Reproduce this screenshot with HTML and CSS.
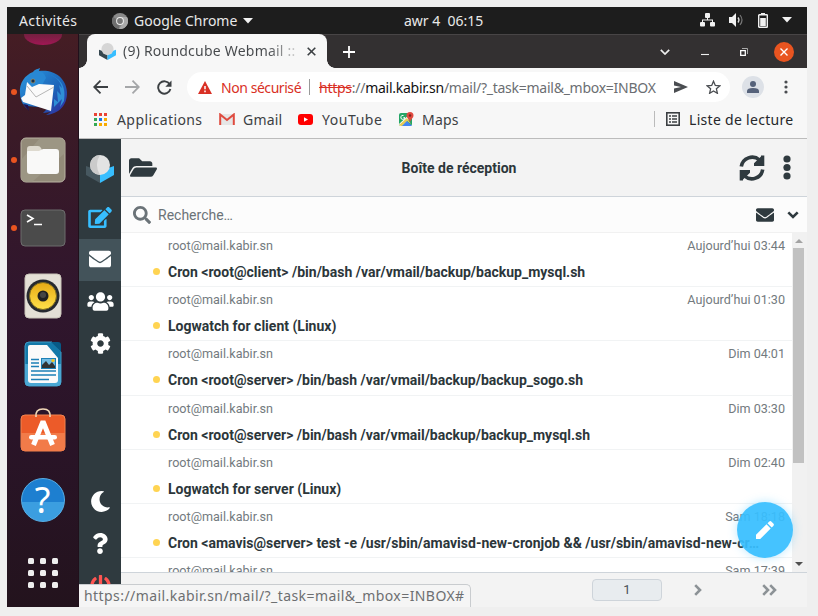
FILE: index.html
```
<!DOCTYPE html>
<html lang="fr">
<head>
<meta charset="utf-8">
<title>Roundcube Webmail</title>
<link rel="stylesheet" href="styles.css">
</head>
<body>
<div class="desktop">
  <header class="topbar">
    <span class="activities">Activités</span>
    <svg class="chrome-ic" width="16" height="16" viewBox="0 0 16 16"><circle cx="8" cy="8" r="8" fill="#8a8a8a"/><path d="M8 8 1.1 4A8 8 0 0 0 7 15.900z" fill="#6e6e6e"/><path d="M8 4h7a8 8 0 0 1-8 12l4-6z" fill="#a9a9a9"/><circle cx="8" cy="8" r="3.900" fill="#eee"/><circle cx="8" cy="8" r="2.900" fill="#777"/></svg>
    <span class="appname">Google Chrome</span>
    <svg class="caret" width="10" height="6" viewBox="0 0 10 6"><path d="M0 0h10L5 5.500z" fill="#f2f2f2"/></svg>
    <span class="clock">awr 4&nbsp; 06:15</span>
    <div class="tray">
      <svg width="15" height="14" viewBox="0 0 15 14" fill="#f2f2f2"><rect x="5" width="5" height="5" rx="1"/><rect y="9" width="5" height="4.500" rx="1"/><rect x="10" y="9" width="5" height="4.500" rx="1"/><path d="M7 4h1v2.500h5V10h-1V7.500H3V10H2V6.500h5z"/></svg>
      <svg width="15" height="14" viewBox="0 0 15 14" fill="none"><path d="M0 4h3l4-4v14l-4-4H0z" fill="#f2f2f2"/><path d="M9 4.500q2 2.500 0 5" stroke="#ddd" stroke-width="1.300"/><path d="M11 2q4 5 0 10" stroke="#777" stroke-width="1.200"/></svg>
      <svg width="10" height="15" viewBox="0 0 10 15"><path d="M3 0h4v1.500H3z" fill="#f2f2f2"/><rect x=".7" y="1.700" width="8.600" height="12.600" rx=".6" fill="none" stroke="#f2f2f2" stroke-width="1.400"/><path d="M2.200 5h5.600v8H2.200z" fill="#f2f2f2"/></svg>
      <svg width="10" height="6" viewBox="0 0 10 6"><path d="M0 0h10L5 5.500z" fill="#f2f2f2"/></svg>
    </div>
  </header>

  <div class="main">
    <nav class="dock">
      <div class="slot first"><span class="firefox"></span></div>
      <div class="slot on"><svg width="50" height="50" viewBox="0 0 50 50">
        <defs><linearGradient id="tb" x1="0" y1="0" x2="1" y2="1"><stop offset="0" stop-color="#2d9be0"/><stop offset=".6" stop-color="#1c63b8"/><stop offset="1" stop-color="#35269b"/></linearGradient></defs>
        <path d="M2 26C1 16 7 8 15 5c2-3 5-3 7-4l-1 3c14-2 27 6 28 21 .5 13-8 22-21 23l5-3-8 1 5-5-21-2 2 4C6 40 2 34 2 26z" fill="url(#tb)"/>
        <path d="M13 8c5-5 13-5 15 3l-4 7-9 2-5 6c-2-7-2-13 3-18z" fill="#2888d4"/>
        <path d="M29 7c8 2 13 6 15 14l-3-3 2 10-4-4 1 11-4-3v8l8-8-2 8 4-6c2-12-1-23-17-27z" fill="#2f8fd6"/>
        <path d="M5 37l6 7-1-6z" fill="#21104d"/>
        <path d="M9 15 7 28 3 31l2 4 28 9 3-26-15-1-7 3z" fill="#fafafa"/>
        <path d="M9 19l9 11 18-10" fill="none" stroke="#b6b6b6"/>
        <circle cx="15" cy="14" r="2" fill="#18314f" stroke="#c39b4f" stroke-width=".6"/>
      </svg></div>
      <div class="slot on"><svg width="46" height="46" viewBox="0 0 46 46"><rect x="1" y="1" width="44" height="44" rx="5" fill="#938b79" stroke="#b9b3a3"/><path d="M20 1h20q5 0 5 5v10L12 45H6q-5 0-5-5V23z" fill="#9f9887" opacity=".8"/><path d="M7 12q0-3 3-3h8q2 0 3 2l1 2h10v8H7z" fill="#dedacf"/><path d="M7 15q0-1 1-1h11l4-2h13q3 0 3 3v19q0 3-3 3H10q-3 0-3-3z" fill="#f9f9f8"/></svg></div>
      <div class="slot on"><svg width="46" height="38" viewBox="0 0 46 38"><rect x="1" y="1" width="44" height="36" rx="4" fill="#4b4b4b" stroke="#6d6d6d"/><path d="m7 6 6 3.500L7 13M14 15.500h8" fill="none" stroke="#fff" stroke-width="1.600"/></svg></div>
      <div class="slot"><svg width="38" height="46" viewBox="0 0 38 46"><defs><linearGradient id="rb" x1="0" y1="0" x2="0" y2="1"><stop offset="0" stop-color="#e5a915"/><stop offset="1" stop-color="#ffe14a"/></linearGradient></defs><rect x="1" y="1" width="36" height="44" rx="4" fill="#e4e0d6" stroke="#c9c4b8"/><circle cx="19" cy="23" r="16.500" fill="#26292f"/><circle cx="19" cy="23" r="13.500" fill="url(#rb)" stroke="#7a6a20"/><circle cx="19" cy="23" r="5.500" fill="#202020"/><circle cx="19" cy="22" r="3" fill="#444"/></svg></div>
      <div class="slot"><svg width="38" height="46" viewBox="0 0 38 46"><path d="M5 1h23l9 10v30q0 4-4 4H5q-4 0-4-4V5q0-4 4-4z" fill="#1379a9" stroke="#3f9cc5"/><path d="M1 23h36v18q0 4-4 4H5q-4 0-4-4z" fill="#4aa8d4"/><path d="M27 1h7q3 0 3 3v7z" fill="#075a86"/><path d="M6 4h17l11 13v22q0 3-3 3H7q-3 0-3-3V6q0-2 2-2z" fill="#fafafa"/><path d="M7 18.500h8M7 22h8M7 25.500h8M7 30h25M7 34h25M7 38.500h18" stroke="#1d80b6" stroke-width="1.700"/><path d="M17 17h15v11H17z" fill="#1d80b6"/><path d="M18 18h13v9H18z" fill="#73bce3"/><path d="m18 27v-3l4-4 3 4 3-3 3 4v2z" fill="#333"/><circle cx="29" cy="19.500" r="1.600" fill="#f5c518"/></svg></div>
      <div class="slot bag"><svg width="46" height="46" viewBox="0 0 46 46"><rect x="1" y="9" width="44" height="36" rx="4" fill="#ec5b29" stroke="#f3834f"/><path d="M1 27h44v14q0 4-4 4H5q-4 0-4-4z" fill="#f27b49"/><path d="M16 12q-1-8 7-8t7 8" fill="none" stroke="#f2d9b8" stroke-width="1.700" transform="translate(0 -1)"/><path d="M13.500 39 23 15.500 32.500 39" fill="none" stroke="#fff" stroke-width="5" stroke-linejoin="bevel"/><rect x="9" y="29" width="28" height="4.600" rx="2.300" fill="#fff"/></svg></div>
      <div class="slot"><span class="help">?</span></div>
      <div class="apps"><i></i><i></i><i></i><i></i><i></i><i></i><i></i><i></i><i></i></div>
    </nav>

    <section class="window">
      <div class="tabstrip">
        <div class="tab">
          <svg width="17" height="17" viewBox="0 0 28 28"><path d="M0 11v9l14 8V16z" fill="#35474f"/><path d="M28 11v9l-14 8V16z" fill="#37beff"/><circle cx="14" cy="10" r="10" fill="#d6d6d6"/></svg>
          <span class="tabtitle">(9) Roundcube Webmail ::</span>
          <svg class="close" width="9" height="9" viewBox="0 0 9 9"><path d="m.7.7 7.600 7.600m0-7.600L.7 8.300" stroke="#3c4043" stroke-width="1.600"/></svg>
        </div>
        <svg class="plus" width="12" height="12" viewBox="0 0 12 12"><path d="M0 6h12M6 0v12" stroke="#fff" stroke-width="1.800"/></svg>
        <div class="winctl">
          <svg width="10" height="6" viewBox="0 0 10 6"><path d="m.8.800 4.200 4.200L9.200.800" fill="none" stroke="#eee" stroke-width="1.700"/></svg>
          <svg width="8" height="8" viewBox="0 0 8 8"><path d="M0 6.500h8" stroke="#eee" stroke-width="1.100"/></svg>
          <svg width="8" height="8" viewBox="0 0 8 8"><path d="M.7 2.700h4.600v4.600H.700z" fill="none" stroke="#fff" stroke-width="1.300"/><path d="M2 .500h5.500V6" fill="none" stroke="#aaa"/></svg>
          <span class="winclose"><svg width="8" height="8" viewBox="0 0 8 8"><path d="m.5.500 7 7m0-7-7 7" stroke="#fff" stroke-width="1.400"/></svg></span>
        </div>
      </div>

      <div class="toolbar">
        <svg width="15" height="14" viewBox="0 0 15 14" fill="none" stroke="#3c4043" stroke-width="1.800"><path d="M15 7H1.500M7.500.700 1.200 7l6.300 6.300"/></svg>
        <svg width="15" height="14" viewBox="0 0 15 14" fill="none" stroke="#a5a7a9" stroke-width="1.800"><path d="M0 7h13.500M7.500.700 13.800 7l-6.300 6.300"/></svg>
        <svg width="15" height="15" viewBox="0 0 15 15"><path d="M12.700 4.300A6.200 6.200 0 1 0 13.400 9" fill="none" stroke="#3c4043" stroke-width="1.900"/><path d="M14.500.500v6.200H8.300z" fill="#3c4043"/></svg>
        <div class="omnibox">
          <svg class="warn" width="14" height="13" viewBox="0 0 14 13"><path d="M7 0l7 13H0z" fill="#d93025"/><path d="M7 5v3.200M7 9.500v1.700" stroke="#fff" stroke-width="1.500"/></svg>
          <span class="insecure">Non sécurisé</span>
          <span class="sep"></span>
          <span class="url"><s>https</s>://<b>mail.kabir.sn</b>/mail/?_task=mail&amp;_mbox=INBOX</span>
          <svg class="send" width="14" height="12" viewBox="0 0 14 12"><path d="M0 0l14 6L0 12V7.500L7 6 0 4.500z" fill="#4a4d51"/></svg>
          <svg class="star" width="15" height="14" viewBox="0 0 15 14"><path d="M7.500 1.200l1.800 4.200 4.600.400-3.500 3 1 4.500-3.900-2.400-3.900 2.400 1-4.500-3.500-3 4.600-.4z" fill="none" stroke="#4a4d51" stroke-width="1.300"/></svg>
        </div>
        <span class="avatar"><svg width="12" height="12" viewBox="0 0 12 12" fill="#56627a"><circle cx="6" cy="3" r="3"/><path d="M0 12v-2q0-3 6-3t6 3v2z"/></svg></span>
        <svg class="kebab" width="4" height="14" viewBox="0 0 4 14" fill="#4a4d51"><circle cx="2" cy="2" r="1.600"/><circle cx="2" cy="7" r="1.600"/><circle cx="2" cy="12" r="1.600"/></svg>
      </div>

      <div class="bookmarks">
        <svg class="grid" width="13" height="13" viewBox="0 0 13 13"><path d="M0 0h3v3H0zm5 0h3v3H5zm5 0h3v3h-3z" fill="#ea4335"/><path d="M0 5h3v3H0zm0 5h3v3H0z" fill="#34a853"/><path d="M5 5h3v3H5z" fill="#1a73e8"/><path d="M10 5h3v3h-3zM5 10h3v3H5zm5 0h3v3h-3z" fill="#f9ab00"/></svg>
        <span class="bm-apps">Applications</span>
        <svg class="gm" width="16" height="12" viewBox="0 0 16 12"><path d="M1 1h14v11H1z" fill="#e6e6e6"/><path d="M1.200 12V1.500L8 7l6.800-5.500V12" fill="none" stroke="#df4b3f" stroke-width="2"/></svg>
        <span class="bm-gmail">Gmail</span>
        <svg class="yt" width="15" height="11" viewBox="0 0 15 11"><rect width="15" height="11" rx="3" fill="red"/><path d="M6 3.200v4.600l4-2.300z" fill="#fff"/></svg>
        <span class="bm-yt">YouTube</span>
        <svg class="mp" width="15" height="15" viewBox="0 0 15 15"><rect y="1" width="13" height="13" rx="2" fill="#24a566"/><path d="M0 12 11 2l2 2-10 10H1z" fill="#fff"/><path d="M0 13 8 6l4 6-4-3-5 5H2z" fill="#e8ca53"/><path d="M3 14l5-5 5 5z" fill="#4285f4"/><path d="M4.500 3.500a2 2 0 1 0 1.300 2H4.500" stroke="#fff" fill="none"/><path d="M11 10C10 7 7.500 6 7.500 3.500a3.500 3.500 0 0 1 7 0C14.500 6 12 7 11 10z" fill="#e04a3f"/><circle cx="11" cy="3.500" r="1.200" fill="#7b231e"/></svg>
        <span class="bm-maps">Maps</span>
        <span class="bm-sep"></span>
        <svg class="rl" width="14" height="14" viewBox="0 0 14 14"><rect x=".8" y=".8" width="12.400" height="12.400" fill="none" stroke="#3c4043" stroke-width="1.600"/><path d="M3 4h2m1 0h5M3 7h2m1 0h5M3 10h2m1 0h5" stroke="#3c4043" stroke-width="1.500"/></svg>
        <span class="bm-list">Liste de lecture</span>
      </div>

      <div class="page">
        <aside class="taskmenu">
          <div class="logo"><svg width="28" height="28" viewBox="0 0 28 28"><path d="M0 11v9l14 8V16z" fill="#475860"/><path d="M28 11v9l-14 8V16z" fill="#37beff"/><circle cx="14" cy="10" r="10" fill="#e3e3e3"/><path d="M14 0a10 10 0 0 0 0 20A18 18 0 0 1 14 0z" fill="#cbcbcb"/></svg></div>
          <div class="task"><svg width="24" height="21" viewBox="0 0 576 512" fill="#37beff"><path d="M402.600 83.200l90.200 90.200c3.800 3.800 3.800 10 0 13.800L274.400 405.600l-92.800 10.300c-12.400 1.400-22.900-9.100-21.500-21.500l10.300-92.800L388.800 83.200c3.800-3.800 10-3.800 13.800 0zm162-22.900l-48.800-48.800c-15.200-15.200-39.900-15.200-55.200 0l-35.400 35.400c-3.800 3.800-3.800 10 0 13.800l90.200 90.200c3.800 3.800 10 3.800 13.800 0l35.400-35.400c15.200-15.300 15.200-40 0-55.200zM384 346.200V448H64V128h229.800c3.200 0 6.200-1.300 8.500-3.500l40-40c7.600-7.600 2.200-20.500-8.500-20.500H48C21.500 64 0 85.500 0 112v352c0 26.500 21.500 48 48 48h352c26.500 0 48-21.500 48-48V306.200c0-10.700-12.900-16-20.500-8.500l-40 40c-2.200 2.300-3.500 5.300-3.500 8.500z"/></svg></div>
          <div class="task sel"><svg width="22" height="22" viewBox="0 0 512 512" fill="#fff"><path d="M502.300 190.800c3.900-3.100 9.700-.2 9.700 4.700V400c0 26.500-21.500 48-48 48H48c-26.500 0-48-21.500-48-48V195.600c0-5 5.700-7.800 9.700-4.700 22.400 17.400 52.100 39.500 154.100 113.600 21.100 15.400 56.700 47.800 92.200 47.600 35.700.3 72-32.800 92.300-47.600 102-74.100 131.600-96.300 154-113.700zM256 320c23.200.4 56.600-29.200 73.400-41.400 132.700-96.300 142.800-104.700 173.400-128.700 5.800-4.500 9.200-11.500 9.200-18.900v-19c0-26.500-21.500-48-48-48H48c-26.500 0-48 21.500-48 48v19c0 7.400 3.400 14.300 9.200 18.900 30.600 23.900 40.700 32.400 173.400 128.700 16.800 12.200 50.200 41.800 73.400 41.400z"/></svg></div>
          <div class="task"><svg width="27" height="21" viewBox="0 0 640 512" fill="#fff"><path d="M96 224c35.300 0 64-28.700 64-64s-28.700-64-64-64-64 28.700-64 64 28.700 64 64 64zm448 0c35.300 0 64-28.700 64-64s-28.700-64-64-64-64 28.700-64 64 28.700 64 64 64zm32 32h-64c-17.600 0-33.500 7.100-45.100 18.600 40.300 22.100 68.900 62 75.100 109.400h66c17.700 0 32-14.300 32-32v-32c0-35.300-28.700-64-64-64zm-256 0c61.900 0 112-50.100 112-112S381.900 32 320 32 208 82.100 208 144s50.100 112 112 112zm76.800 32h-8.300c-20.800 10-43.900 16-68.500 16s-47.600-6-68.500-16h-8.300C179.600 288 128 339.600 128 403.200V432c0 26.500 21.500 48 48 48h288c26.500 0 48-21.500 48-48v-28.800c0-63.600-51.600-115.200-115.200-115.200zm-223.700-13.400C161.500 263.100 145.600 256 128 256H64c-35.300 0-64 28.700-64 64v32c0 17.700 14.300 32 32 32h65.900c6.300-47.400 34.900-87.300 75.200-109.400z"/></svg></div>
          <div class="task"><svg width="21" height="21" viewBox="0 0 512 512" fill="#fff"><path d="M487.400 315.700l-42.600-24.600c4.300-23.200 4.300-47 0-70.200l42.600-24.600c4.900-2.800 7.100-8.600 5.500-14-11.100-35.600-30-67.800-54.700-94.600-3.800-4.100-10-5.100-14.800-2.300L380.800 110c-17.900-15.400-38.500-27.300-60.800-35.100V25.800c0-5.600-3.900-10.500-9.400-11.700-36.700-8.200-74.300-7.800-109.200 0-5.500 1.200-9.400 6.100-9.400 11.700V75c-22.200 7.900-42.800 19.800-60.800 35.100L88.700 85.500c-4.900-2.800-11-1.900-14.800 2.300-24.700 26.700-43.600 58.900-54.700 94.600-1.700 5.400.6 11.200 5.500 14L67.300 221c-4.300 23.200-4.300 47 0 70.200l-42.600 24.600c-4.900 2.800-7.100 8.600-5.500 14 11.100 35.600 30 67.800 54.700 94.600 3.800 4.100 10 5.100 14.800 2.300l42.600-24.600c17.900 15.400 38.500 27.300 60.800 35.100v49.200c0 5.600 3.900 10.500 9.400 11.700 36.700 8.200 74.300 7.800 109.200 0 5.500-1.200 9.400-6.100 9.400-11.700v-49.200c22.200-7.900 42.800-19.800 60.800-35.100l42.600 24.600c4.900 2.800 11 1.900 14.800-2.300 24.700-26.700 43.600-58.900 54.700-94.600 1.500-5.500-.7-11.300-5.600-14.100zM256 336c-44.100 0-80-35.900-80-80s35.900-80 80-80 80 35.900 80 80-35.900 80-80 80z"/></svg></div>
          <div class="task low"><svg width="21" height="21" viewBox="0 0 512 512" fill="#fff"><path d="M283.211 512c78.962 0 151.079-35.925 198.857-94.792 7.068-8.708-.639-21.430-11.562-19.350-124.203 23.654-238.262-71.576-238.262-196.954 0-72.222 38.662-138.635 101.498-174.394 9.686-5.512 7.250-20.197-3.756-22.230A258.156 258.156 0 0 0 283.211 0c-141.309 0-256 114.511-256 256 0 141.309 114.511 256 256 256z"/></svg></div>
          <div class="task"><svg width="16" height="21" viewBox="0 0 384 512" fill="#fff"><path d="M202.021 0C122.202 0 70.503 32.703 29.914 91.026c-7.363 10.580-5.093 25.086 5.178 32.874l43.138 32.709c10.373 7.865 25.132 6.026 33.253-4.148 25.049-31.381 43.630-49.449 82.757-49.449 30.764 0 68.816 19.799 68.816 49.631 0 22.552-18.617 34.134-48.993 51.164-35.423 19.860-82.299 44.576-82.299 106.405V320c0 13.255 10.745 24 24 24h72.471c13.255 0 24-10.745 24-24v-5.773c0-42.860 125.268-44.645 125.268-160.627C377.504 66.256 286.902 0 202.021 0zM192 373.459c-38.196 0-69.271 31.075-69.271 69.271 0 38.195 31.075 69.270 69.271 69.270s69.271-31.075 69.271-69.271-31.075-69.270-69.271-69.270z"/></svg></div>
          <div class="task"><svg width="21" height="21" viewBox="0 0 512 512" fill="#ff5552"><path d="M400 54.100c63 45 104 118.600 104 201.900 0 136.800-110.800 247.700-247.500 248C120 504.300 8.200 393 8 256.400 7.900 173.100 48.900 99.300 111.800 54.200c11.700-8.300 28-4.800 35 7.700L162.600 90c5.900 10.500 3.100 23.800-6.600 31-41.500 30.800-68 79.600-68 134.900-.1 92.300 74.500 168.100 168 168.100 91.600 0 168.600-74.200 168-169.100-.3-51.800-24.700-101.800-68.100-134-9.700-7.200-12.400-20.500-6.500-30.900l15.800-28.100c7-12.400 23.200-16.100 34.800-7.800zM296 264V24c0-13.300-10.700-24-24-24h-32c-13.300 0-24 10.700-24 24v240c0 13.300 10.700 24 24 24h32c13.300 0 24-10.700 24-24z"/></svg></div>
        </aside>

        <div class="content">
          <div class="head">
            <svg class="folder" width="28" height="25" viewBox="0 0 576 512" fill="#2f3a3f"><path d="M572.694 292.093L500.270 416.248A63.997 63.997 0 0 1 444.989 448H45.025c-18.523 0-30.064-20.093-20.731-36.093l72.424-124.155A64 64 0 0 1 152 256h399.964c18.523 0 30.064 20.093 20.730 36.093zM152 224h328v-48c0-26.510-21.490-48-48-48H272l-64-64H48C21.490 64 0 85.490 0 112v278.046l69.077-118.418C86.214 242.250 117.989 224 152 224z"/></svg>
            <h1>Boîte de réception</h1>
            <svg class="sync" width="26" height="26" viewBox="0 0 26 26"><g id="half"><path d="M2.300 11.500A11 11 0 0 1 20.500 5" fill="none" stroke="#2f3a3f" stroke-width="3.600"/><path d="M25.300.600V11H15V8.200l7-6.600V.600z" fill="#2f3a3f"/></g><use href="#half" transform="rotate(180 13 13)"/></svg>
            <svg class="dots" width="8" height="25" viewBox="0 0 8 25" fill="#2f3a3f"><circle cx="4" cy="4" r="3.600"/><circle cx="4" cy="12.500" r="3.600"/><circle cx="4" cy="21" r="3.600"/></svg>
          </div>
          <div class="search">
            <svg width="18" height="18" viewBox="0 0 512 512" fill="#6b7378"><path d="M505 442.700L405.300 343c-4.500-4.500-10.600-7-17-7H372c27.600-35.300 44-79.700 44-128C416 93.100 322.900 0 208 0S0 93.100 0 208s93.100 208 208 208c48.300 0 92.700-16.400 128-44v16.300c0 6.400 2.500 12.500 7 17l99.700 99.700c9.400 9.400 24.600 9.400 33.900 0l28.300-28.300c9.400-9.400 9.400-24.600.1-34zM208 336c-70.700 0-128-57.200-128-128 0-70.700 57.200-128 128-128 70.700 0 128 57.200 128 128 0 70.700-57.200 128-128 128z"/></svg>
            <span class="ph">Recherche…</span>
            <svg class="env" width="18" height="18" viewBox="0 0 512 512" fill="#2f3a3f"><path d="M502.300 190.800c3.900-3.100 9.700-.2 9.700 4.700V400c0 26.500-21.500 48-48 48H48c-26.500 0-48-21.500-48-48V195.600c0-5 5.700-7.800 9.700-4.700 22.400 17.400 52.100 39.500 154.100 113.600 21.100 15.400 56.700 47.800 92.200 47.600 35.700.3 72-32.800 92.300-47.600 102-74.100 131.600-96.300 154-113.700zM256 320c23.200.4 56.600-29.200 73.400-41.400 132.700-96.300 142.800-104.700 173.400-128.700 5.800-4.500 9.200-11.500 9.200-18.900v-19c0-26.500-21.500-48-48-48H48c-26.500 0-48 21.500-48 48v19c0 7.400 3.400 14.300 9.200 18.900 30.600 23.900 40.700 32.400 173.400 128.700 16.800 12.200 50.200 41.800 73.400 41.400z"/></svg>
            <svg class="chev" width="12" height="8" viewBox="0 0 12 8"><path d="m1.300 1.300L6 6l4.700-4.700" fill="none" stroke="#2f3a3f" stroke-width="2.600"/></svg>
          </div>
          <div class="listwrap">
            <ul class="list">
              <li><div class="meta"><span>root@mail.kabir.sn</span><span>Aujourd’hui 03:44</span></div><p>Cron &lt;root@client&gt; /bin/bash /var/vmail/backup/backup_mysql.sh</p></li>
              <li><div class="meta"><span>root@mail.kabir.sn</span><span>Aujourd’hui 01:30</span></div><p>Logwatch for client (Linux)</p></li>
              <li><div class="meta"><span>root@mail.kabir.sn</span><span>Dim 04:01</span></div><p>Cron &lt;root@server&gt; /bin/bash /var/vmail/backup/backup_sogo.sh</p></li>
              <li><div class="meta"><span>root@mail.kabir.sn</span><span>Dim 03:30</span></div><p>Cron &lt;root@server&gt; /bin/bash /var/vmail/backup/backup_mysql.sh</p></li>
              <li><div class="meta"><span>root@mail.kabir.sn</span><span>Dim 02:40</span></div><p>Logwatch for server (Linux)</p></li>
              <li><div class="meta"><span>root@mail.kabir.sn</span><span>Sam 18:18</span></div><p>Cron &lt;amavis@server&gt; test -e /usr/sbin/amavisd-new-cronjob &amp;&amp; /usr/sbin/amavisd-new-cr…</p></li>
              <li><div class="meta"><span>root@mail.kabir.sn</span><span>Sam 17:39</span></div></li>
            </ul>
            <div class="scroll"><i class="up"></i><i class="thumb"></i><i class="down"></i></div>
          </div>
          <div class="pager">
            <span class="pg">1</span>
            <svg class="next" width="8" height="12" viewBox="0 0 8 12"><path d="m1.200 1.200 4.800 4.800-4.800 4.800" fill="none" stroke="#8c9296" stroke-width="2.600"/></svg>
            <svg class="last" width="15" height="12" viewBox="0 0 15 12"><path d="m1.200 1.200 4.800 4.800-4.800 4.800m7-9.600L13 6l-4.800 4.800" fill="none" stroke="#8c9296" stroke-width="2.600"/></svg>
          </div>
          <div class="fab"><svg width="18" height="18" viewBox="0 0 18 18" fill="#fff"><path d="M0 18v-4.200L10.500 3.300l4.200 4.200L4.200 18zM11.500 2.300l1.600-1.600q1.200-1.200 2.400 0l1.800 1.800q1.200 1.200 0 2.400l-1.600 1.600z"/></svg></div>
        </div>
        <div class="status">https://mail.kabir.sn/mail/?_task=mail&amp;_mbox=INBOX#</div>
      </div>
    </section>
  </div>
</div>
</body>
</html>
```
FILE: styles.css
```
* { box-sizing: border-box; }
body { margin: 0; padding: 7px; width: 818px; height: 616px; overflow: hidden; background: #efefef; font-family: "Noto Sans", "Open Sans", sans-serif; font-size: 14px; }
svg { display: block; flex: none; }
span { white-space: nowrap; }
.desktop { width: 800px; height: 600px; overflow: hidden; display: flex; flex-direction: column; background: #2c1426; }

.topbar { height: 27px; flex: none; background: #1d1d1d; color: #e9e9e9; display: flex; align-items: center; padding-left: 12px; }
.activities { width: 93px; letter-spacing: .4px; }
.appname { margin-left: 6px; width: 105px; }
.caret { margin-left: 4px; }
.clock { margin-left: 151px; width: 79px; margin-top: -1px; }
.tray { margin-left: auto; margin-right: 15px; margin-top: -1px; display: flex; align-items: center; gap: 14px; }

.main { flex: 1; display: flex; min-height: 0; }
.dock { width: 72px; flex: none; display: flex; flex-direction: column; align-items: center; background: linear-gradient(#451d24 0, #3a1a27 18%, #30162d 45%, #2a1428 70%, #23131d 100%); border-right: 1px solid #20101b; overflow: hidden; }
.slot { position: relative; width: 72px; height: 68px; flex: none; display: flex; align-items: center; justify-content: center; }
.slot.first { height: 24px; align-items: flex-start; }
.slot.bag { padding-bottom: 6px; }
.firefox { width: 38px; height: 11px; border-radius: 0 0 20px 20px / 0 0 11px 11px; background: linear-gradient(#73203f, #a01754); }
.slot.on::before { content: ""; position: absolute; left: 4px; top: 31px; width: 6px; height: 6px; border-radius: 50%; background: #e95420; }
.help { width: 44px; height: 44px; border-radius: 50%; border: 1px solid #57afe7; background: linear-gradient(#1d7fd0 0 54%, #3b9ee0 55%); color: #fff; font: 36px/42px "Noto Sans", sans-serif; text-align: center; }
.apps { margin-top: 24px; display: grid; grid-template-columns: repeat(3, 6px); gap: 6px; }
.apps i { width: 6px; height: 6px; border-radius: 1.500px; background: #eee; }

.window { width: 728px; display: flex; flex-direction: column; background: #f7f7f7; min-height: 0; }
.tabstrip { height: 34px; flex: none; background: #333031; border-top: 1px solid #484546; display: flex; align-items: center; padding-left: 8px; }
.tab { position: relative; width: 240px; height: 34px; margin-top: -1px; background: #f7f7f7; border-radius: 8px 8px 0 0; display: flex; align-items: center; padding-left: 12px; color: #45484b; }
.tab::before, .tab::after { content: ""; position: absolute; bottom: 0; width: 8px; height: 8px; }
.tab::before { left: -8px; background: radial-gradient(circle at 0 0, transparent 7.500px, #f7f7f7 8px); }
.tab::after { right: -8px; background: radial-gradient(circle at 100% 0, transparent 7.500px, #f7f7f7 8px); }
.tabtitle { margin-left: 7px; margin-top: -1px; width: 176px; overflow: hidden; letter-spacing: .22px; background: linear-gradient(90deg, #45484b 82%, #ccc 98%); -webkit-background-clip: text; background-clip: text; color: transparent; }
.close { margin-left: 8px; }
.plus { margin-left: 16px; }
.winctl { margin-left: auto; margin-right: 13px; display: flex; align-items: center; gap: 31px; }
.winclose { width: 20px; height: 20px; margin-left: -5px; border-radius: 50%; background: #e95420; display: flex; align-items: center; justify-content: center; }

.toolbar { height: 38px; flex: none; display: flex; align-items: center; padding-left: 14px; gap: 17px; }
.omnibox { width: 543px; height: 30px; margin-left: -2px; border-radius: 15px; background: #fff; display: flex; align-items: center; padding-left: 11px; }
.insecure { margin-left: 9px; width: 81px; color: #d93025; letter-spacing: -.44px; }
.sep { width: 1px; height: 16px; background: #999; margin: 0 9px 0 7px; }
.url { width: 339px; color: #6b6e72; letter-spacing: -.26px; }
.url b { font-weight: 400; color: #111; }
.url s { color: #d93025; }
.send { margin-left: 16px; }
.star { margin-left: 18px; }
.avatar { width: 22px; height: 22px; margin-left: -5px; border-radius: 50%; background: #dde1e7; display: flex; align-items: center; justify-content: center; }
.kebab { margin-left: 3px; }

.bookmarks { height: 33px; flex: none; border-bottom: 1px solid #bcbcbc; display: flex; align-items: center; padding: 0 0 6px 15px; color: #3c4043; }
.bm-apps { margin-left: 10px; width: 86px; letter-spacing: .42px; }
.gm { margin-left: 16px; }
.bm-gmail { margin-left: 8px; width: 39px; letter-spacing: .2px; }
.yt { margin-left: 16px; }
.bm-yt { margin-left: 9px; width: 60px; letter-spacing: .55px; }
.mp { margin-left: 17px; }
.bm-maps { margin-left: 8px; width: 37px; letter-spacing: .2px; }
.bm-sep { margin-left: 195px; width: 1px; height: 16px; background: #bbb; }
.rl { margin-left: 11px; }
.bm-list { margin-left: 9px; color: #26282b; letter-spacing: .3px; }

.page { position: relative; flex: 1; display: flex; min-height: 0; font-family: Roboto, sans-serif; color: #2c363a; }
.taskmenu { width: 42px; flex: none; background: #2f3a3f; display: flex; flex-direction: column; overflow: hidden; }
.logo { height: 58px; flex: none; display: flex; align-items: center; justify-content: center; padding-top: 2px; }
.task { height: 42px; flex: none; display: flex; align-items: center; justify-content: center; padding-bottom: 2px; }
.sel { background: #43535a; }
.low { margin-top: 116px; }
.content { position: relative; flex: 1; min-width: 0; display: flex; flex-direction: column; background: #fff; }
.head { height: 58px; flex: none; background: #f3f3f3; border-bottom: 1px solid #ced4da; display: flex; align-items: center; padding: 0 16px 0 8px; }
.head h1 { flex: 1; margin: 0; padding-left: 22px; text-align: center; font-size: 14px; font-weight: 700; }
.dots { margin-left: 18px; }
.search { height: 36px; flex: none; background: #fcfcfc; border-bottom: 1px solid #f1f1f1; display: flex; align-items: center; padding: 0 8px 0 12px; }
.ph { margin-left: 7px; color: #6b7378; }
.env { margin-left: auto; }
.chev { margin-left: 13px; }
.listwrap { flex: 1; min-height: 0; display: flex; overflow: hidden; }
.list { flex: 1; min-width: 0; margin: 0; padding: 0; list-style: none; }
.list li { height: 54.200px; border-bottom: 1px solid #f1f3f4; padding: 4px 7px 0 47px; }
.meta { display: flex; justify-content: space-between; font-size: 12.600px; line-height: 18px; color: #737a7e; }
.list p { position: relative; margin: 7px 20px 0 -15px; padding-left: 15px; font-size: 14px; line-height: 21px; font-weight: 700; white-space: nowrap; }
.list p::before { content: ""; position: absolute; left: 0; top: 6px; width: 7px; height: 7px; border-radius: 50%; background: #ffd452; }
.scroll { width: 15px; flex: none; background: #f1f1f1; display: flex; flex-direction: column; align-items: center; padding: 6px 2px 4px 0; }
.up, .down { border: 4px solid transparent; width: 0; height: 0; }
.up { border-top: 0; border-bottom-color: #a3a3a3; }
.thumb { width: 11px; height: 215px; margin-top: 5px; background: #c1c1c1; }
.down { border-bottom: 0; border-top-color: #505050; margin-top: auto; margin-bottom: 2px; }
.pager { height: 35px; flex: none; background: #f3f3f3; border-top: 1px solid #ced4da; display: flex; align-items: center; padding-left: 471px; }
.pg { width: 70px; height: 22px; border: 1px solid #ced4da; border-radius: 4px; background: #e8ecef; font-size: 13px; line-height: 20px; text-align: center; color: #495057; }
.next { margin-left: 32px; }
.last { margin-left: 60px; }
.fab { position: absolute; right: 14px; bottom: 49px; width: 56px; height: 56px; border-radius: 50%; background: rgba(55, 190, 255, .93); box-shadow: 0 0 10px rgba(55, 190, 255, .35); display: flex; align-items: center; justify-content: center; }
.status { position: absolute; left: 0; bottom: 0; width: 392px; height: 23px; padding-left: 5px; background: #f5f5f5; border: 1px solid #c9cccf; border-left: 0; border-bottom: 0; border-radius: 0 5px 0 0; font: 14px/21px "Noto Sans", sans-serif; letter-spacing: .43px; color: #6d6f71; white-space: nowrap; }
```
